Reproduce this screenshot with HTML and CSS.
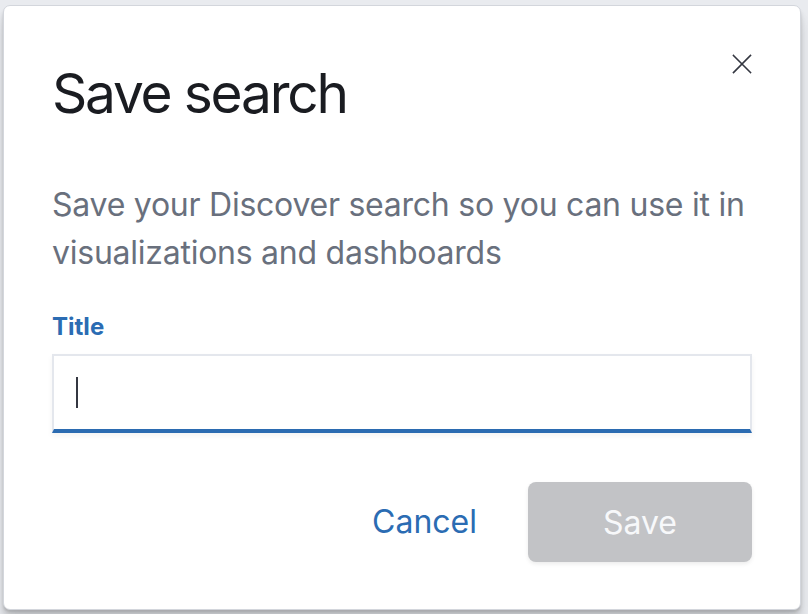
FILE: index.html
```html
<!DOCTYPE html>
<html lang="en">
<head>
<meta charset="utf-8">
<title>Save search</title>
<link rel="stylesheet" href="styles.css">
</head>
<body>
<div class="page">
  <div class="modal" role="dialog" aria-labelledby="modal-title">
    <div class="modal-header">
      <h1 class="modal-title" id="modal-title">Save search</h1>
      <button class="close-btn" type="button" aria-label="Close">
        <svg width="20" height="20" viewBox="0 0 20 20" aria-hidden="true">
          <path d="M1.5 1.5 L18.5 18.5 M18.5 1.5 L1.5 18.5" stroke="#343741" stroke-width="1.6" fill="none" stroke-linecap="square"/>
        </svg>
      </button>
    </div>
    <p class="modal-text">Save your Discover search so you can use it in visualizations and dashboards</p>
    <label class="field-label">Title</label>
    <div class="field-input"><span class="caret"></span></div>
    <div class="modal-footer">
      <button class="btn-empty" type="button">Cancel</button>
      <button class="btn-fill" type="button" disabled>Save</button>
    </div>
  </div>
</div>
</body>
</html>
```

FILE: styles.css
```css
html, body {
  margin: 0;
  padding: 0;
  width: 808px;
  height: 614px;
  overflow: hidden;
  background: #e9ebef;
  font-family: Inter, "Noto Sans", sans-serif;
}

.page {
  padding: 5px 0 0 3px;
}

.modal {
  width: 798px;
  box-sizing: border-box;
  background: #ffffff;
  border: 1px solid #d3d6dc;
  border-radius: 7px;
  padding: 0 48px 47px 48px;
  display: flex;
  flex-direction: column;
  box-shadow: 0 2px 2px rgba(0, 0, 0, 0.08), 0 4px 4px rgba(0, 0, 0, 0.08), 0 8px 8px rgba(0, 0, 0, 0.08), 0 16px 16px rgba(0, 0, 0, 0.08);
}

.modal-header {
  display: flex;
  justify-content: space-between;
  align-items: flex-start;
  padding-top: 48px;
}

.modal-title {
  margin: 4px 0 0 0;
  font-size: 55px;
  line-height: 70px;
  font-weight: 400;
  color: #1a1c21;
  letter-spacing: -0.04em;
}

.close-btn {
  margin: 0;
  padding: 0;
  border: 0;
  background: none;
  width: 20px;
  height: 20px;
  display: flex;
}

.modal-text {
  margin: 53px 0 0 0;
  font-size: 32px;
  line-height: 48px;
  letter-spacing: -0.25px;
  color: #69707d;
}

.field-label {
  margin-top: 32px;
  font-size: 24px;
  line-height: 36px;
  font-weight: 700;
  color: #2b6cb3;
}

.field-input {
  margin-top: 9px;
  height: 79px;
  box-sizing: border-box;
  border: 2px solid #e4e7ed;
  border-bottom: 4px solid #2b6bb1;
  background: #ffffff;
  display: flex;
  align-items: center;
  padding-left: 22px;
  box-shadow: 0 3px 6px rgba(0, 0, 0, 0.05);
}

.caret {
  width: 2px;
  height: 31px;
  background: #343741;
}

.modal-footer {
  margin-top: 49px;
  display: flex;
  justify-content: flex-end;
  align-items: center;
  gap: 27px;
}

.btn-empty {
  border: 0;
  background: none;
  padding: 0 24px;
  font-family: inherit;
  font-size: 32px;
  line-height: 48px;
  color: #2b6cb3;
}

.btn-fill {
  width: 224px;
  height: 80px;
  border: 0;
  border-radius: 8px;
  background: #c2c3c6;
  color: #f7f8fa;
  font-family: inherit;
  font-size: 32px;
  box-shadow: 0 2px 4px rgba(0, 0, 0, 0.08);
}
```
